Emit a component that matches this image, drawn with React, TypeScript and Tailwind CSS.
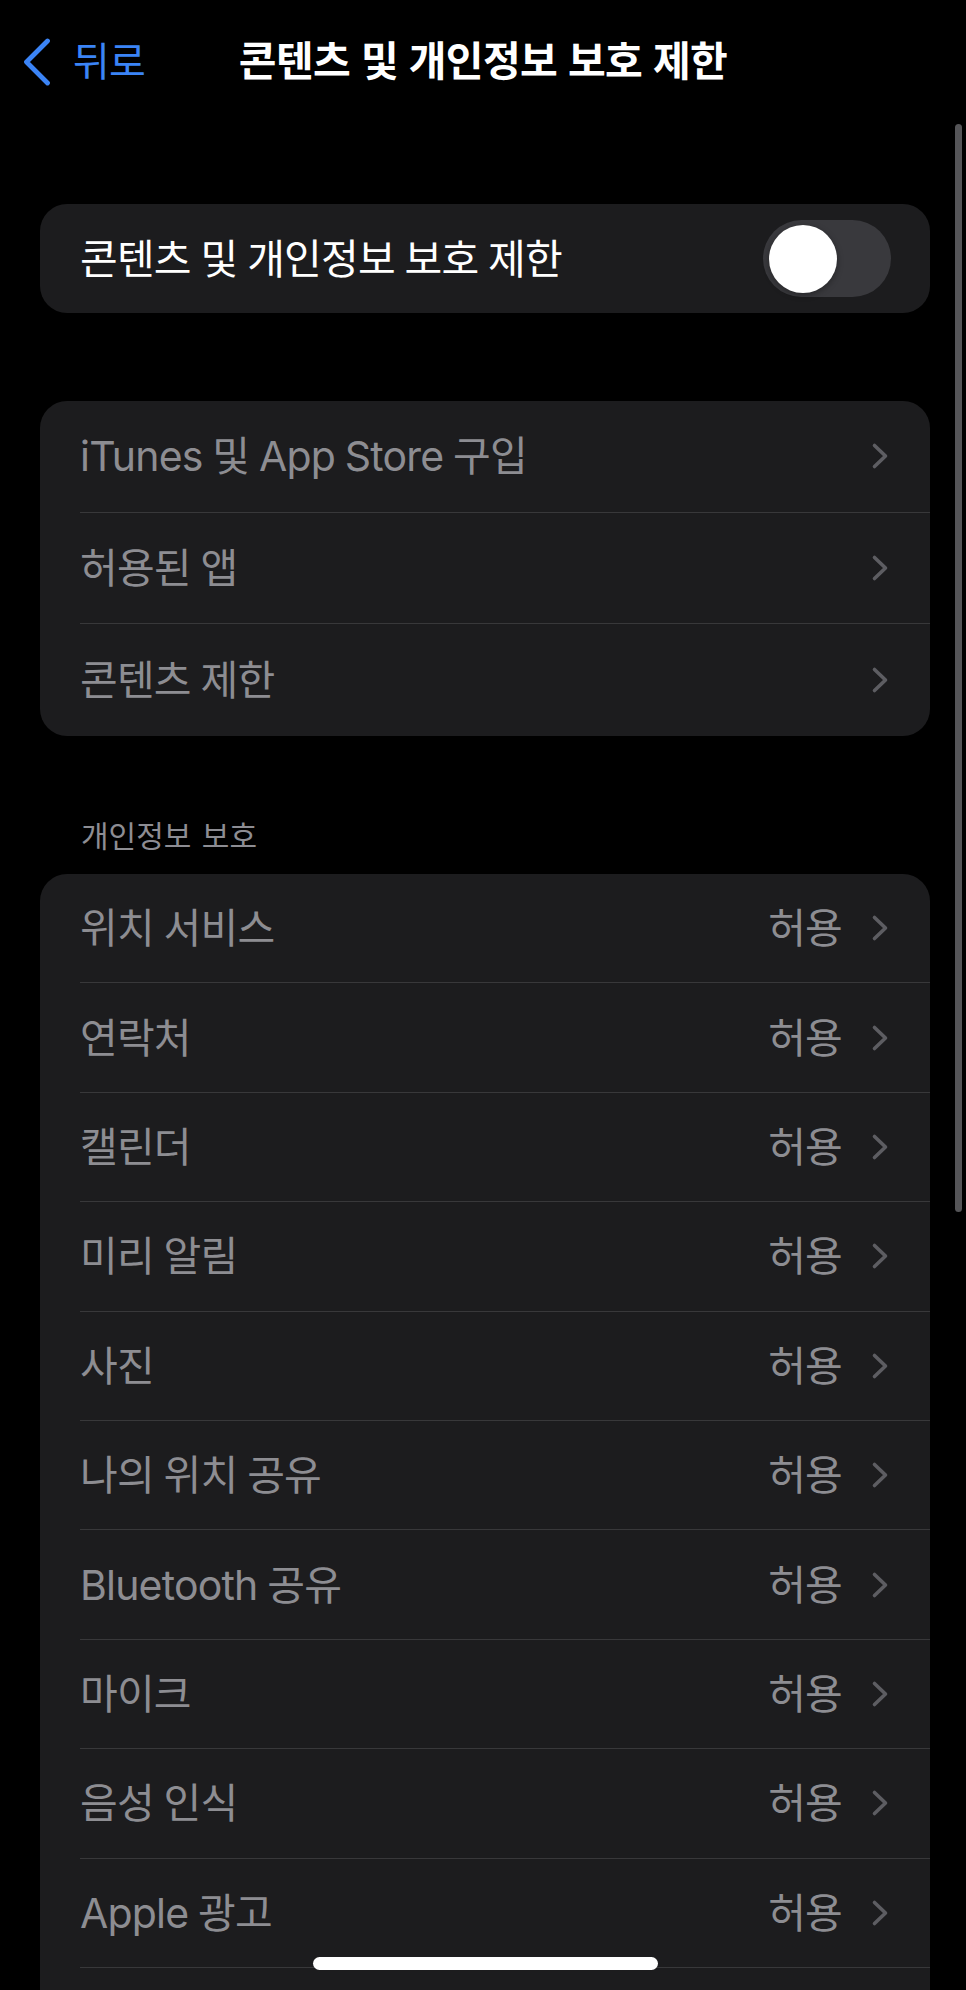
import React from "react";

const restrictions = ["iTunes 및 App Store 구입", "허용된 앱", "콘텐츠 제한"];

const privacy = [
  "위치 서비스",
  "연락처",
  "캘린더",
  "미리 알림",
  "사진",
  "나의 위치 공유",
  "Bluetooth 공유",
  "마이크",
  "음성 인식",
  "Apple 광고",
];

function Chevron() {
  return (
    <svg width="18" height="28" viewBox="0 0 18 28" fill="none" className="shrink-0">
      <path
        d="M3.5 3.5 L14.5 14 L3.5 24.5"
        stroke="#5d5d62"
        strokeWidth="3.6"
        strokeLinecap="round"
        strokeLinejoin="round"
      />
    </svg>
  );
}

function Row({
  label,
  value,
  tall,
  last,
}: {
  label: string;
  value?: string;
  tall?: boolean;
  last?: boolean;
}) {
  return (
    <div className="pl-[40px]">
      <div
        className={
          (tall ? "h-[111.7px] " : "h-[109.4px] ") +
          (last ? "" : "border-b border-[#38383a] ") +
          "flex items-center justify-between pr-[41px]"
        }
      >
        <span className="text-[41px] leading-[48px] tracking-[-0.8px] [word-spacing:-1px] text-[#8d8d92]">
          {label}
        </span>
        <div className="flex items-center gap-[29px]">
          {value && (
            <span className="text-[41px] leading-[48px] tracking-[-0.8px] text-[#8d8d92]">{value}</span>
          )}
          <Chevron />
        </div>
      </div>
    </div>
  );
}

export default function App() {
  return (
    <div className="relative h-[1990px] w-full overflow-hidden bg-black font-['Inter','Noto_Sans_CJK_KR',sans-serif] text-white">
      {/* nav bar */}
      <div className="grid h-[124px] grid-cols-[1fr_auto_1fr] items-start pt-[38px]">
        <div className="flex h-[48px] items-center gap-[22px] pl-[23px]">
          <svg width="28" height="48" viewBox="0 0 28 48" fill="none">
            <path
              d="M24.5 3 L3.5 24 L24.5 45"
              stroke="#3b84f6"
              strokeWidth="4.8"
              strokeLinecap="round"
              strokeLinejoin="round"
            />
          </svg>
          <span className="text-[40px] leading-[48px] tracking-[-0.8px] text-[#3b84f6]">뒤로</span>
        </div>
        <div className="flex h-[48px] items-center text-[41px] font-semibold tracking-[-0.6px] [word-spacing:1px]">
          콘텐츠 및 개인정보 보호 제한
        </div>
        <div />
      </div>

      <div className="ml-[40px] mr-[36px]">
        {/* master toggle */}
        <div className="mt-[80px] flex h-[109px] items-center justify-between rounded-[27px] bg-[#1c1c1e] pl-[40px] pr-[39px]">
          <span className="text-[41px] leading-[48px] tracking-[-0.8px] [word-spacing:-1px]">
            콘텐츠 및 개인정보 보호 제한
          </span>
          <div className="flex h-[77px] w-[128px] items-center rounded-full bg-[#39393d] pl-[6px]">
            <div className="h-[68px] w-[68px] rounded-full bg-white shadow-[0_2px_6px_rgba(0,0,0,0.35)]" />
          </div>
        </div>

        {/* store / apps / content */}
        <div className="mt-[88px] overflow-hidden rounded-[27px] bg-[#1c1c1e]">
          {restrictions.map((r, i) => (
            <Row key={r} label={r} tall last={i === restrictions.length - 1} />
          ))}
        </div>

        {/* privacy */}
        <div className="pl-[41px] pt-[82px] pb-[20px] text-[30px] leading-[36px] [word-spacing:2px] text-[#8d8d93]">
          개인정보 보호
        </div>
        <div className="overflow-hidden rounded-[27px] bg-[#1c1c1e]">
          {privacy.map((p) => (
            <Row key={p} label={p} value="허용" />
          ))}
          <div className="h-[60px]" />
        </div>
      </div>

      {/* scroll indicator */}
      <div className="absolute left-[955px] top-[124px] h-[1088px] w-[7px] rounded-full bg-[#555558]" />

      {/* home indicator */}
      <div className="absolute left-[313px] top-[1957px] h-[13px] w-[345px] rounded-full bg-white" />
    </div>
  );
}
